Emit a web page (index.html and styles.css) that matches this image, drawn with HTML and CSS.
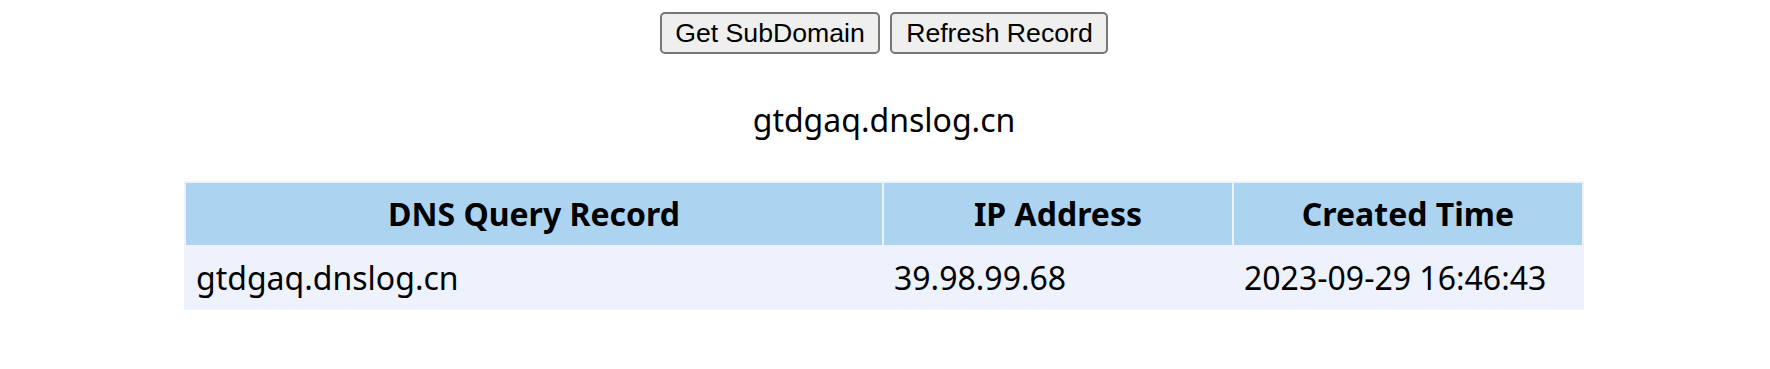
FILE: index.html
```html
<!DOCTYPE html>
<html lang="en">
<head>
<meta charset="utf-8">
<title>DNSLog Platform</title>
<link rel="stylesheet" href="styles.css">
</head>
<body>
<div class="page">
  <div class="actions">
    <button class="btn" type="button">Get SubDomain</button>
    <button class="btn" type="button">Refresh Record</button>
  </div>
  <div class="domain">gtdgaq.dnslog.cn</div>
  <table class="records">
    <thead>
      <tr>
        <th class="col-wide">DNS Query Record</th>
        <th class="col-narrow">IP Address</th>
        <th class="col-narrow">Created Time</th>
      </tr>
    </thead>
    <tbody>
      <tr>
        <td>gtdgaq.dnslog.cn</td>
        <td>39.98.99.68</td>
        <td>2023-09-29 16:46:43</td>
      </tr>
    </tbody>
  </table>
</div>
</body>
</html>
```
FILE: styles.css
```css
html, body {
  margin: 0;
  background: #ffffff;
}

body {
  padding: 0 10px 0 8px;
  font-family: "Noto Sans", "Open Sans", sans-serif;
  font-size: 32px;
  color: #000000;
}

.page {
  padding-top: 12px;
}

.actions {
  display: flex;
  justify-content: center;
  gap: 10px;
}

.btn {
  font-family: "Liberation Sans", Arial, sans-serif;
  font-size: 26.67px;
  line-height: 30px;
  padding: 4px 13.65px;
  color: #000000;
  background: #efefef;
  border: 2px solid #767676;
  border-radius: 5px;
  cursor: pointer;
}

.domain {
  text-align: center;
  line-height: 44px;
  margin: 44px 0 39px;
}

.records {
  width: 1400px;
  margin: 0 auto;
  border-spacing: 2px;
  background: #eef2fd;
  table-layout: fixed;
}

.records th,
.records td {
  box-sizing: border-box;
}

.col-wide {
  width: 696px;
}

.col-narrow {
  width: 348px;
}

.records th {
  background: #acd3ef;
  font-weight: 700;
  text-align: center;
  line-height: 44px;
  padding: 9px 10px;
}

.records td {
  background: #eef2fd;
  text-align: left;
  line-height: 44px;
  padding: 8.5px 10px;
}
```
